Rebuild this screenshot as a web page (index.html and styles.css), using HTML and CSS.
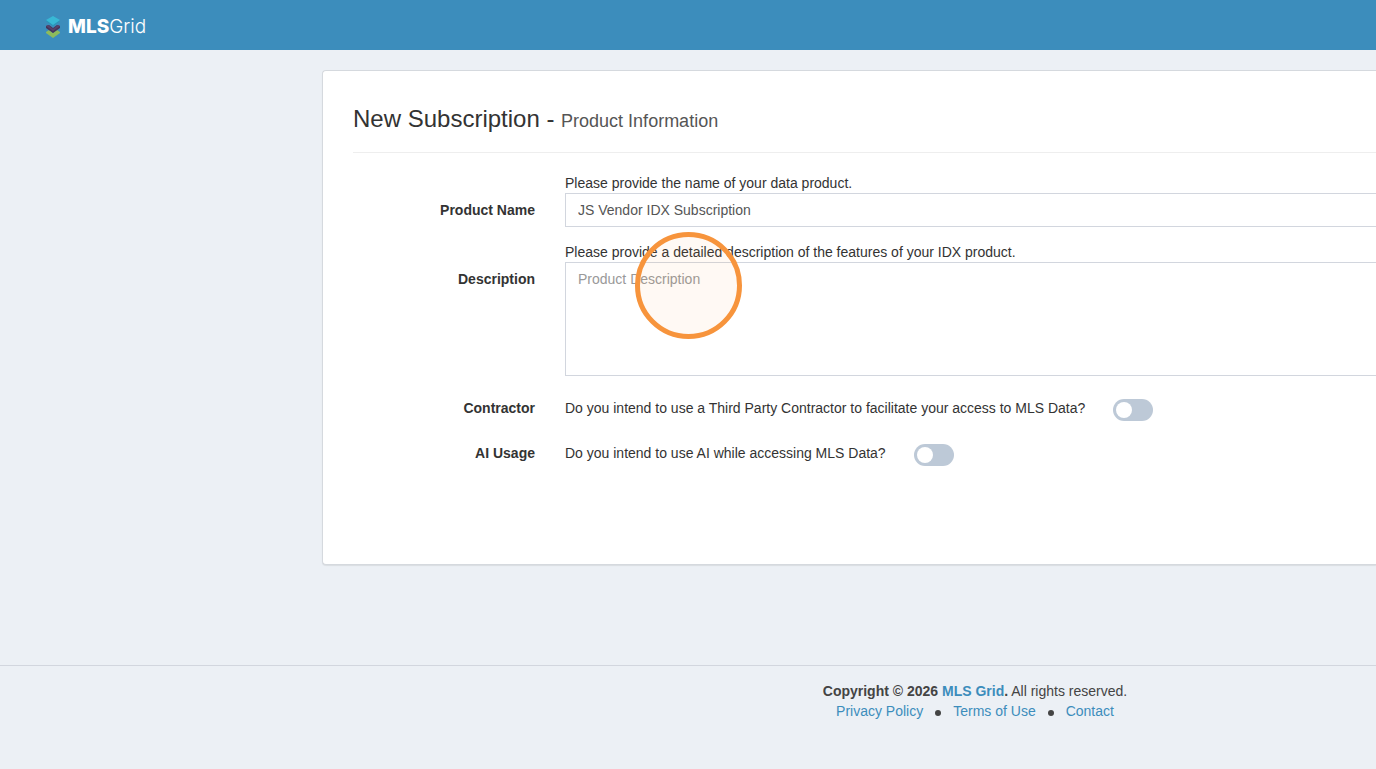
FILE: index.html
```html
<!DOCTYPE html>
<html lang="en">
<head>
    <meta charset="UTF-8">
    <meta name="viewport" content="width=device-width, initial-scale=1.0">
    <title>MLS Grid - New Subscription</title>
    <link rel="stylesheet" href="styles.css">
</head>
<body>
    <header class="navbar">
        <a class="logo" href="#">
            <svg class="logo-mark" viewBox="0 0 16 22" aria-hidden="true">
                <path d="M1 16l3-2 4 3 4-3 3 2v1l-7 5-7-5z" fill="#8dbb5c"/>
                <path d="M1 10l3-1 4 3 4-3 3 1v2l-7 5-7-5z" fill="#44355b"/>
                <path d="M1 10l2-1 5 4 5-4 2 1-7 5z" fill="#57436b"/>
                <path d="M1 4l7 4 7-4v1l-7 5-7-5z" fill="#2697b8"/>
                <path d="M8 0l7 4-7 5-7-5z" fill="#38b8d5"/>
            </svg>
            <span class="logo-text"><strong>MLS</strong>Grid</span>
        </a>
    </header>

    <main class="content">
        <section class="panel">
            <h1 class="page-title">New Subscription - <small>Product Information</small></h1>

            <form class="form">
                <div class="form-group">
                    <label class="form-label label-below" for="product-name">Product Name</label>
                    <div class="field">
                        <p class="hint">Please provide the name of your data product.</p>
                        <input class="form-control" type="text" id="product-name" value="JS Vendor IDX Subscription">
                    </div>
                </div>

                <div class="form-group">
                    <label class="form-label label-below" for="description">Description</label>
                    <div class="field">
                        <p class="hint">Please provide a detailed description of the features of your IDX product.</p>
                        <textarea class="form-control form-textarea" id="description" placeholder="Product Description"></textarea>
                        <span class="click-marker"></span>
                    </div>
                </div>

                <div class="form-group">
                    <label class="form-label" for="contractor">Contractor</label>
                    <div class="field switch-row">
                        <span>Do you intend to use a Third Party Contractor to facilitate your access to MLS Data?</span>
                        <input class="switch" type="checkbox" id="contractor">
                    </div>
                </div>

                <div class="form-group">
                    <label class="form-label" for="ai-usage">AI Usage</label>
                    <div class="field switch-row">
                        <span>Do you intend to use AI while accessing MLS Data?</span>
                        <input class="switch" type="checkbox" id="ai-usage">
                    </div>
                </div>
            </form>
        </section>
    </main>

    <footer class="footer">
        <div><strong>Copyright © 2026 <a href="#">MLS Grid</a>.</strong> All rights reserved.</div>
        <nav class="footer-links">
            <a href="#">Privacy Policy</a>
            <span class="dot"></span>
            <a href="#">Terms of Use</a>
            <span class="dot"></span>
            <a href="#">Contact</a>
        </nav>
    </footer>
</body>
</html>
```
FILE: styles.css
```css
* {
    box-sizing: border-box;
}

body {
    display: flex;
    flex-direction: column;
    min-height: 100vh;
    margin: 0;
    background-color: #ecf0f5;
    color: #333;
    font-family: "Liberation Sans", Helvetica, Arial, sans-serif;
    font-size: 14px;
    line-height: 20px;
}

a {
    color: #3c8dbc;
    text-decoration: none;
}

/* Top bar */
.navbar {
    display: flex;
    align-items: center;
    height: 50px;
    padding: 3px 45px 0;
    background-color: #3c8dbc;
}

.logo {
    display: flex;
    align-items: center;
    gap: 7px;
    color: #fff;
}

.logo-mark {
    width: 16px;
    height: 22px;
}

.logo-text {
    font-family: Inter, sans-serif;
    font-size: 19px;
    font-weight: 300;
}

.logo-text strong {
    font-weight: 800;
}

/* Panel */
.content {
    padding: 20px 0 100px 322px;
}

.panel {
    padding: 30px 0 83px 30px;
    background-color: #fff;
    border: 1px solid #d5d9de;
    border-right: none;
    border-radius: 4px 0 0 4px;
    box-shadow: 0 1px 1px rgba(0, 0, 0, 0.08);
}

.page-title {
    margin: 0 0 20px;
    padding: 3px 0 18px;
    border-bottom: 1px solid #eee;
    font-size: 24px;
    font-weight: 400;
    line-height: 30px;
}

.page-title small {
    color: #555;
    font-size: 18px;
    line-height: 20px;
}

/* Form */
.form-group {
    display: grid;
    grid-template-columns: 182px 1fr;
    column-gap: 30px;
    margin-bottom: 15px;
}

.form-label {
    padding-top: 7px;
    font-weight: 700;
    text-align: right;
}

.label-below {
    padding-top: 27px;
}

.field {
    position: relative;
}

.hint {
    margin: 0;
}

.form-control {
    display: block;
    width: 100%;
    height: 34px;
    padding: 6px 12px;
    border: 1px solid #d2d6de;
    border-right: none;
    border-radius: 0;
    background-color: #fff;
    color: #555;
    font: inherit;
}

.form-textarea {
    height: 114px;
    resize: none;
}

.form-control::placeholder {
    color: #999;
    opacity: 1;
}

.switch-row {
    display: flex;
    align-items: flex-start;
    gap: 28px;
    padding-top: 7px;
}

.switch {
    appearance: none;
    width: 40px;
    height: 22px;
    margin: 1px 0 0;
    padding: 3px;
    border-radius: 11px;
    background-color: #bdc9d7;
}

.switch::before {
    content: "";
    display: block;
    width: 16px;
    height: 16px;
    border-radius: 50%;
    background-color: #fff;
}

.switch:checked {
    background-color: #3c8dbc;
}

.switch:checked::before {
    margin-left: auto;
}

.click-marker {
    position: absolute;
    top: -10px;
    left: 70px;
    width: 107px;
    height: 107px;
    border: 5px solid #f7943c;
    border-radius: 50%;
    background-color: rgba(247, 148, 60, 0.06);
    pointer-events: none;
}

/* Footer */
.footer {
    flex: 1;
    padding: 15px 0 15px 574px;
    border-top: 1px solid #d2d6de;
    color: #444;
    text-align: center;
}

.footer-links {
    display: flex;
    align-items: center;
    justify-content: center;
    gap: 12px;
}

.dot {
    width: 6px;
    height: 6px;
    margin-top: 4px;
    border-radius: 50%;
    background-color: #444;
}
```
